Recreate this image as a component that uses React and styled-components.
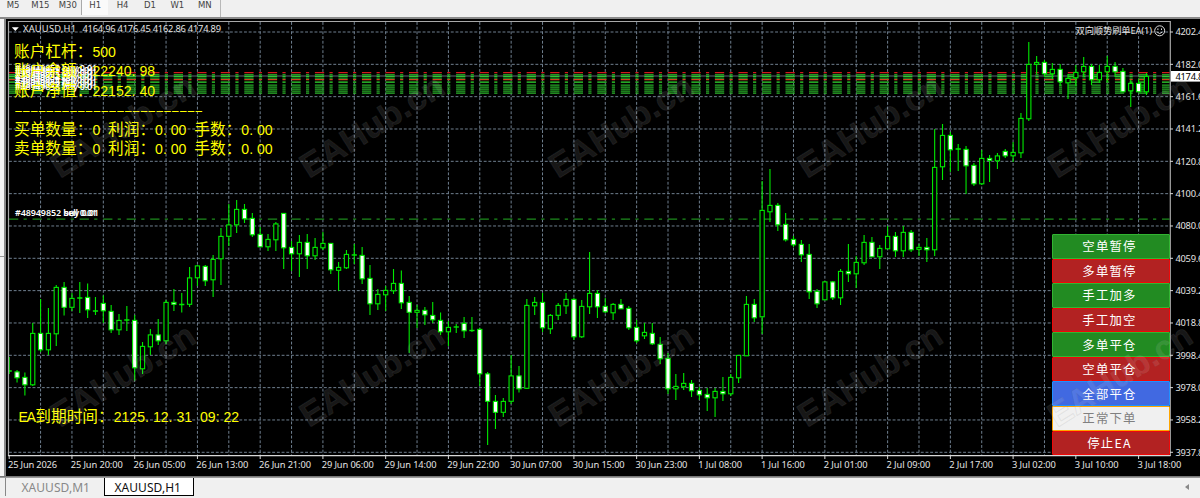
import styled, { createGlobalStyle } from 'styled-components';

const X0 = 9.2;
const STEP = 7.843;
const GRID_STEP = STEP * 4;
const ROW_STEP = 32.33;

// [high, body top, body bottom, low, type] with f = filled, h = hollow, d = doji
const CANDLES = [
	[357, 371, 371, 374, 'd'], [370, 371.5, 378, 382.5, 'f'], [372.5, 377, 385, 395.5, 'f'],
	[323, 333, 385, 386, 'h'], [299, 333, 350, 352, 'f'], [308, 333, 350, 355, 'h'],
	[285, 287, 334, 346, 'h'], [282, 287, 307.5, 315.5, 'f'], [293, 298, 307.5, 311, 'h'],
	[282, 298, 298, 313, 'd'], [283.5, 297, 310, 318, 'f'], [297, 311, 311, 315, 'd'],
	[295.5, 303, 311, 323, 'f'], [305, 311, 330, 333, 'f'], [314, 320, 330, 335, 'h'],
	[306, 320, 320, 331, 'd'], [315, 320, 368, 380.5, 'f'], [342, 346, 369, 374, 'h'],
	[329, 334.5, 347, 355, 'h'], [319, 334.5, 341, 345, 'f'], [300, 302, 341, 344, 'h'],
	[289, 302, 304.5, 311, 'f'], [293, 304.5, 304.5, 312.5, 'd'], [267, 277.5, 304.5, 307, 'h'],
	[265, 265.5, 278, 286, 'h'], [265, 266, 281, 286, 'f'], [255, 259, 280, 297, 'h'],
	[228, 236, 259, 285, 'h'], [204, 224.5, 236.5, 246, 'h'], [200, 209, 225, 233, 'h'],
	[204, 209, 219, 223, 'f'], [213, 218, 235, 237, 'f'], [227, 234, 247, 247, 'f'],
	[234, 239, 247, 251, 'h'], [222, 223.5, 240, 251, 'h'], [213, 213, 248, 269, 'f'],
	[241, 247, 254, 271, 'f'], [235, 242, 254, 277, 'h'], [234, 242, 256, 269, 'f'],
	[238, 247, 256, 260, 'h'], [232, 243, 248, 250, 'h'], [243, 243, 270, 274, 'f'],
	[262, 267, 270.5, 291, 'h'], [250, 254, 268, 269, 'h'], [244, 255, 255, 264, 'd'],
	[247, 255, 279, 284, 'f'], [265, 278, 304, 315, 'f'], [289, 294, 304, 310, 'h'],
	[286, 290, 295, 311, 'h'], [269, 283, 291, 294, 'h'], [270.5, 283, 303, 309, 'f'],
	[296, 302, 312.5, 353, 'f'], [305, 310, 312.5, 328, 'h'], [307, 310, 315, 325, 'f'],
	[302, 315, 320, 323, 'f'], [312.5, 320, 332, 335, 'f'], [321, 327, 332, 346, 'h'],
	[324, 327, 327, 333, 'd'], [317, 323, 331, 338, 'f'], [317, 330.5, 330.5, 332, 'd'],
	[328, 329, 374, 386, 'f'], [372, 373.5, 401.5, 445, 'f'], [395, 401, 412.5, 429, 'f'],
	[398, 401, 412.5, 417, 'h'], [355, 375.5, 401.5, 404, 'h'], [366, 375.5, 389, 392.5, 'f'],
	[299, 305, 388.5, 389, 'h'], [297, 302, 306, 315, 'h'], [293, 302, 328, 332, 'f'],
	[314, 315, 329, 334, 'h'], [303, 305, 315.5, 320, 'h'], [293, 299, 306, 314, 'h'],
	[298, 299, 337, 340, 'f'], [300, 306, 337, 338, 'h'], [252, 293, 307, 314, 'h'],
	[290, 293, 307, 318, 'f'], [298, 306, 312, 313, 'f'], [303, 304, 313, 320, 'h'],
	[299, 304, 309, 309, 'f'], [306, 308, 328, 330, 'f'], [320, 327, 341, 343, 'f'],
	[323, 332, 336, 339, 'h'], [323, 333, 344, 345, 'f'], [337, 344, 359, 364, 'f'],
	[353, 358, 389, 394, 'f'], [374, 386, 389, 400, 'h'], [373, 383, 387, 390, 'h'],
	[380, 383, 391, 397, 'f'], [387, 390, 395, 400, 'f'], [388, 394, 398, 411, 'f'],
	[388, 391, 398, 417, 'h'], [377, 391, 394, 401, 'f'], [374, 377, 394, 396, 'h'],
	[355, 355, 378, 383, 'h'], [296, 304, 356, 356, 'h'], [299, 304, 318, 322, 'f'],
	[181, 210, 317, 334, 'h'], [169, 205, 212, 222, 'h'], [203, 205, 225, 231, 'f'],
	[213, 224, 240, 241.5, 'f'], [236, 239, 245, 247, 'f'], [240, 244, 255, 262, 'f'],
	[244, 254, 292, 299, 'f'], [289, 291, 304, 308, 'f'], [281, 281.5, 300, 300, 'h'],
	[281, 281.5, 298, 300, 'f'], [269, 271, 298, 305, 'h'], [244, 271, 274, 282, 'f'],
	[256, 262, 274, 288, 'h'], [235, 242, 263, 265, 'h'], [237, 242, 257, 257, 'f'],
	[245, 248, 257, 269, 'h'], [226, 236, 249, 249, 'h'], [232, 236, 251, 257, 'f'],
	[226, 232, 251, 257, 'h'], [230, 232, 250, 252, 'f'], [244, 247, 249.5, 256, 'h'],
	[238, 247, 250, 262, 'f'], [129, 167, 250, 256, 'h'], [124, 135, 167, 180, 'h'],
	[132, 135, 150, 172, 'f'], [144, 149, 149, 171, 'd'], [146, 149, 166, 194, 'f'],
	[163, 165, 184, 186, 'f'], [150, 158, 184, 185, 'h'], [155, 158, 160.5, 182, 'f'],
	[153, 155.5, 161, 169, 'h'], [149, 151, 156, 158, 'f'], [142, 152, 156, 162, 'h'],
	[113, 118, 153, 158, 'h'], [42, 64, 119, 121, 'h'], [56, 62, 64.5, 74, 'h'],
	[60, 62, 74, 77, 'f'], [63, 69, 74, 79, 'h'], [64, 69, 82, 86, 'f'],
	[74, 78, 83, 99, 'h'], [65, 72, 78, 86, 'h'], [57, 66, 72, 77, 'h'],
	[64, 66, 80, 85, 'f'], [65, 72, 80, 83, 'h'], [56, 66, 72, 82, 'h'],
	[62, 66, 72, 77, 'f'], [68, 71, 92, 92, 'f'], [80, 83, 91, 107, 'h'],
	[79, 83, 92, 92, 'f'], [73, 76, 92, 95, 'h'],
];

const LEVELS = [
	[72.6, '#d01c1c'],
	[74.5, '#1f9a1f'],
	[76.4, '#2fc82f'],
	[78, '#1f9a1f'],
	[79.7, '#d04420'],
	[82, '#32dd32'],
	[85, '#26a826'],
	[87, '#26a826'],
	[89, '#26a826'],
	[91, '#26a826'],
	[93.2, '#2cb82c'],
];

const PRICES = [
	'4202.4', '4182.0', '4161.6', '4141.2', '4120.8', '4100.4', '4080.0',
	'4059.6', '4039.2', '4018.8', '3998.4', '3978.0', '3958.2', '3937.8',
];

const TIMES = [
	'25 Jun 2026', '25 Jun 20:00', '26 Jun 05:00', '26 Jun 13:00', '26 Jun 21:00',
	'29 Jun 06:00', '29 Jun 14:00', '29 Jun 22:00', '30 Jun 07:00', '30 Jun 15:00',
	'30 Jun 23:00', '1 Jul 08:00', '1 Jul 16:00', '2 Jul 01:00', '2 Jul 09:00',
	'2 Jul 17:00', '3 Jul 02:00', '3 Jul 10:00', '3 Jul 18:00',
];

const BUTTONS = [
	['空单暂停', 'green'],
	['多单暂停', 'red'],
	['手工加多', 'green'],
	['手工加空', 'red'],
	['多单平仓', 'green'],
	['空单平仓', 'red'],
	['全部平仓', 'blue'],
	['正常下单', 'plain'],
	['停止EA', 'red'],
];

const TONES = {
	green: ['#228b22', '#32b432', '#fff'],
	red: ['#b22222', '#f00808', '#fff'],
	blue: ['#4169e1', '#1e90ff', '#fff'],
	plain: ['#f0f0f0', '#ffa500', '#808080'],
};

function Candle({ data, x }) {
	const [high, top, bottom, low, type] = data;
	return (
		<g stroke="#00ea00" strokeWidth="1.1">
			<line x1={x} x2={x} y1={high} y2={low} />
			{type === 'd' ? (
				<line x1={x - 2.6} x2={x + 2.6} y1={top} y2={top} strokeWidth="1.4" />
			) : (
				<rect
					x={x - 2.1}
					y={top + 0.4}
					width="4.2"
					height={Math.max(bottom - top - 0.6, 1)}
					fill={type === 'f' ? '#fff' : '#000'}
				/>
			)}
		</g>
	);
}

function Chart() {
	const columns = Array.from({ length: 36 }, (_, i) => X0 + (i + 1) * GRID_STEP);
	const rows = Array.from({ length: 14 }, (_, i) => 32 + i * ROW_STEP);
	return (
		<ChartSvg viewBox="6 19 1194 456">
			<clipPath id="plot">
				<rect x="8.5" y="22" width="1161" height="433" />
			</clipPath>
			<g clipPath="url(#plot)">
				<g stroke="#6f7f8f" strokeWidth="1" strokeDasharray="2.9 1.8">
					{columns.map((x) => (
						<line key={x} x1={x} x2={x} y1="22" y2="455" />
					))}
					{rows.map((y) => (
						<line key={y} x1="9" x2="1170" y1={y} y2={y} />
					))}
				</g>
				<line x1="9" x2="1170" y1="76" y2="76" stroke="#5d6672" strokeWidth="1.2" />
				<g strokeDasharray="9.3 5.3 3.2 5.73">
					{LEVELS.map(([y, color]) => (
						<line key={y} x1="9" x2="1170" y1={y} y2={y} stroke={color} strokeWidth="1.25" />
					))}
					<line x1="9" x2="1170" y1="219.2" y2="219.2" stroke="#1c8c1c" strokeWidth="1.3" />
				</g>
				{CANDLES.map((data, i) => (
					<Candle key={i} data={data} x={X0 + i * STEP} />
				))}
			</g>
			<path d="M8.5 456V21.5H1170.3V456" fill="none" stroke="#a8a8a8" strokeWidth="1.2" />
			<path d="M8 455.6H1170.5" stroke="#d8d8d8" strokeWidth="1.2" />
			{rows.map((y) => (
				<path key={y} d={`M1170 ${y}h3`} stroke="#d8d8d8" />
			))}
			{TIMES.map((label, i) => {
				const x = X0 + i * GRID_STEP * 2;
				return (
					<g key={label}>
						<path d={`M${x} 456v3`} stroke="#d8d8d8" />
						<AxisText x={x - 1.2} y="467.6" textLength={i === 0 ? 49 : label.length === 12 ? 52 : 44}>
							{label}
						</AxisText>
					</g>
				);
			})}
			{rows.map((y, i) => (
				<AxisText key={y} x="1175.4" y={y + 3.4} textLength="28">
					{PRICES[i]}
				</AxisText>
			))}
			<rect x="1171" y="71" width="29" height="10.6" fill="#fff" />
			<AxisText x="1175.4" y="79.6" textLength="28" $dark>
				4174.8
			</AxisText>
			<path d="M11.8 27.3h7l-3.5 3.8z" fill="#fff" />
			<AxisText x="23" y="32" textLength="53">XAUUSD,H1</AxisText>
			<AxisText x="82.5" y="32" textLength="138.5">
				4164.96 4176.45 4162.86 4174.89
			</AxisText>
			<AxisText x="1075.5" y="33.8" textLength="76.5">双向顺势刷单EA(1)</AxisText>
			<g fill="none" stroke="#ddd" strokeWidth="1">
				<circle cx="1159.7" cy="30.8" r="5" />
				<path d="M1157.2 32.2q2.5 2.6 5 0M1157.9 28.4v1.6M1161.5 28.4v1.6" />
			</g>
			<OrderText x="15" y="216.4" textLength="84">#48949852 buy 0.01</OrderText>
			<OrderText x="64" y="216.4" textLength="33">sell 0.01</OrderText>
			{[71, 73, 75, 77.5, 80, 82.5, 85, 87.5, 90].map((y, i) => (
				<OrderText key={y} x="15" y={y} textLength={82 - (i % 2) * 3}>
					{`#4894985${i} ${i % 2 ? 'sell' : 'buy'} 0.01`}
				</OrderText>
			))}
		</ChartSvg>
	);
}

function Watermarks() {
	return (
		<MarkSvg viewBox="0 0 1200 498">
			{[179, 428].map((y) =>
				[60, 309, 558, 807, 1057].map((x) => (
					<text
						key={`${x}-${y}`}
						transform={`translate(${x} ${y}) rotate(-32)`}
						textLength="163"
					>
						EAHub.cn
					</text>
				))
			)}
		</MarkSvg>
	);
}

// Digits keep a half-width cell, so dots and colons are padded to the same advance
function Num({ children }) {
	return (
		<Digits>
			{children.split(/([.:])/).map((part, i) =>
				part === '.' || part === ':' ? <Dot key={i}>{part}</Dot> : part
			)}
		</Digits>
	);
}

function App() {
	return (
		<Window>
			<GlobalStyle />
			<Toolbar>
				{['M5', 'M15', 'M30', 'H1', 'H4', 'D1', 'W1', 'MN'].map((name) => (
					<Period key={name} $active={name === 'H1'}>
						{name}
					</Period>
				))}
			</Toolbar>
			<Main>
				<Strip>
					<StripPane />
				</Strip>
				<ChartFrame>
					<Chart />
					<Info>
						<p>账户杠杆：<Num>500</Num></p>
						<p>账户余额：<Num>22240.98</Num></p>
						<p>账户净值：<Num>22152.40</Num></p>
						<p><Rule>––––––––––––––––––––––––</Rule></p>
						<p>买单数量：<Num>0 </Num>利润：<Num>0.00 </Num>手数：<Num>0.00</Num></p>
						<p>卖单数量：<Num>0 </Num>利润：<Num>0.00 </Num>手数：<Num>0.00</Num></p>
					</Info>
					<Expiry>
						<Latin>EA</Latin>到期时间：<Num>2125.12.31 09:22</Num>
					</Expiry>
					<Actions>
						{BUTTONS.map(([label, tone]) => (
							<Action key={label} $tone={tone}>
								{label}
							</Action>
						))}
					</Actions>
				</ChartFrame>
			</Main>
			<Tabs>
				<Tab>XAUUSD,M1</Tab>
				<Tab $active>XAUUSD,H1</Tab>
				<Scroll viewBox="0 0 4 6">
					<path d="M4 0v6L0 3z" fill="#888" />
				</Scroll>
			</Tabs>
			<Watermarks />
		</Window>
	);
}

const GlobalStyle = createGlobalStyle`
	body {
		margin: 0;
		background: #f0f0f0;
		overflow: hidden;
	}
	* {
		box-sizing: border-box;
	}
`;

const Window = styled.div`
	position: relative;
	width: 1200px;
	height: 498px;
	display: flex;
	flex-direction: column;
	overflow: hidden;
	background: #f0f0f0;
	font-family: 'Noto Sans', 'Noto Sans CJK SC', sans-serif;
`;

const Toolbar = styled.div`
	height: 17px;
	flex: none;
	width: 221px;
	display: flex;
	border-right: 1px solid #b8b8b8;
`;

const Period = styled.div`
	width: 27.4px;
	flex: none;
	height: 15px;
	line-height: 11px;
	text-align: center;
	font-family: 'DejaVu Sans', sans-serif;
	font-size: 8.5px;
	color: #444;
	background: ${({ $active }) => ($active ? '#fafafa' : 'transparent')};
	border-left: 1px solid ${({ $active }) => ($active ? '#aaa' : 'transparent')};
	&:first-child {
		margin-left: -1.2px;
	}
`;

const Main = styled.div`
	height: 459px;
	flex: none;
	display: flex;
	border-top: 2px solid #8a8a8a;
`;

const Strip = styled.div`
	width: 6px;
	flex: none;
	background: #f4f4f4;
	border-right: 2px solid #8a8a8a;
`;

const StripPane = styled.div`
	height: 238px;
	border-bottom: 1px solid #999;
`;

const ChartFrame = styled.div`
	position: relative;
	flex: 1;
	height: 457px;
	background: #000;
`;

const ChartSvg = styled.svg`
	display: block;
	width: 1194px;
	height: 456px;
`;

const AxisText = styled.text`
	font-family: 'Noto Sans', 'Noto Sans CJK SC', sans-serif;
	font-size: 9.3px;
	fill: ${({ $dark }) => ($dark ? '#000' : '#e4e4e4')};
`;

const OrderText = styled.text`
	font-family: 'Noto Sans', sans-serif;
	font-size: 9px;
	font-weight: 600;
	fill: #fff;
`;

const Info = styled.div`
	position: absolute;
	left: 8px;
	top: 21.5px;
	color: #ff0;
	font-family: 'Noto Sans CJK SC', sans-serif;
	font-size: 15.68px;
	line-height: 19.6px;
	white-space: pre;
	p {
		margin: 0;
		height: 19.6px;
	}
`;

const Digits = styled.span`
	font-family: 'Liberation Sans', sans-serif;
	font-size: 14.1px;
	line-height: 1;
	word-spacing: 3.92px;
`;

const Dot = styled.span`
	letter-spacing: 3.92px;
`;

const Latin = styled(Digits)`
	letter-spacing: -1.5px;
	margin-right: 1px;
`;

const Rule = styled.span`
	font-family: 'Liberation Mono', monospace;
	font-size: 15px;
	line-height: 1;
	letter-spacing: -1.16px;
`;

const Expiry = styled(Info)`
	left: 12.5px;
	top: 386.5px;
`;

const Actions = styled.div`
	position: absolute;
	right: 30px;
	top: 215px;
	width: 118px;
	height: 221px;
	display: flex;
	flex-direction: column;
`;

const Action = styled.button`
	flex: 1;
	min-height: 0;
	padding: 0 3px 0 0;
	border: 1px solid ${({ $tone }) => TONES[$tone][1]};
	border-radius: 1px;
	background: ${({ $tone }) => TONES[$tone][0]};
	color: ${({ $tone }) => TONES[$tone][2]};
	font-family: 'Noto Sans CJK SC', sans-serif;
	font-size: 12.4px;
	line-height: 20px;
	letter-spacing: 1.2px;
`;

const Tabs = styled.div`
	position: relative;
	flex: 1;
	display: flex;
	padding-left: 5px;
	border-top: 1px solid #777;
	box-shadow: inset 0 1px #999;
`;

const Tab = styled.div`
	width: ${({ $active }) => ($active ? '90px' : '99px')};
	height: 18px;
	margin-top: 1px;
	line-height: 19px;
	padding-left: ${({ $active }) => ($active ? '9.5px' : '15.5px')};
	font-size: 12px;
	letter-spacing: 0.05px;
	color: ${({ $active }) => ($active ? '#111' : '#888')};
	background: ${({ $active }) => ($active ? '#fff' : 'transparent')};
	border: ${({ $active }) => ($active ? '1px solid #000' : '0')};
	border-left: 1px solid ${({ $active }) => ($active ? '#000' : '#888')};
	border-top: 0;
`;

const Scroll = styled.svg`
	width: 4px;
	height: 6px;
	margin: 7px 11px 0 auto;
`;

const MarkSvg = styled.svg`
	position: absolute;
	left: 0;
	top: 0;
	width: 1200px;
	height: 498px;
	pointer-events: none;
	text {
		font-family: 'Liberation Sans', sans-serif;
		font-weight: 700;
		font-size: 34px;
		fill: rgba(255, 255, 255, 0.1);
		stroke: rgba(128, 128, 128, 0.14);
		stroke-width: 1px;
		stroke-linejoin: round;
	}
`;

export default App;
